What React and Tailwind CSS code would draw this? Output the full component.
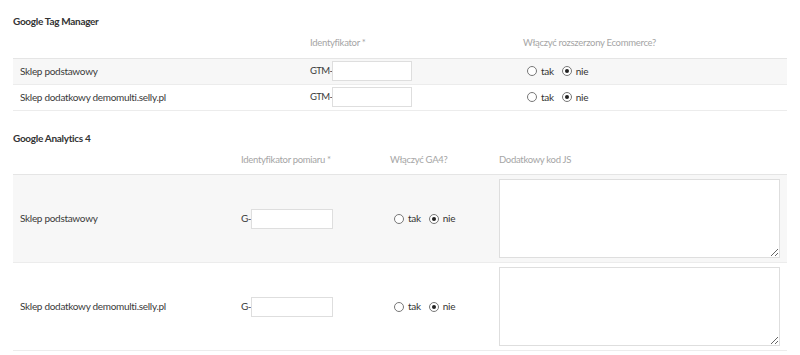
import React from 'react';

const Radio = ({ checked }) => (
  <span className="inline-flex h-[10px] w-[10px] items-center justify-center rounded-full border border-[#777] bg-white">
    {checked && <span className="h-[4px] w-[4px] rounded-full bg-[#222]" />}
  </span>
);

const YesNo = () => (
  <div className="ml-[4px] flex items-center text-[10px] text-[#333]">
    <Radio />
    <span className="ml-[4px] mr-[8px]">tak</span>
    <Radio checked />
    <span className="ml-[4px]">nie</span>
  </div>
);

const shops = ['Sklep podstawowy', 'Sklep dodatkowy demomulti.selly.pl'];

const App = () => {
  return (
    <div className="h-[355px] w-[800px] bg-white px-[13px] font-['Lato','Open_Sans',sans-serif] text-[10px] tracking-[-0.3px] text-[#3a3a3a]">
      <h3 className="pt-[15px] text-[10px] font-bold leading-[13px] text-[#333]">Google Tag Manager</h3>

      <table className="w-full table-fixed border-collapse">
        <colgroup>
          <col className="w-[290px]" />
          <col className="w-[213px]" />
          <col />
        </colgroup>
        <thead>
          <tr className="h-[30px] border-b border-[#e5e5e5] text-left text-[9.5px] text-[#a5a5a5]">
            <th className="px-[7px] font-normal"></th>
            <th className="px-[7px] pb-[7px] align-bottom font-normal">Identyfikator *</th>
            <th className="px-[7px] pb-[7px] align-bottom font-normal">Włączyć rozszerzony Ecommerce?</th>
          </tr>
        </thead>
        <tbody>
          {shops.map((shop, i) => (
            <tr key={shop} className={`h-[26px] border-b border-[#ececec] ${i === 0 ? 'bg-[#f7f7f7]' : 'bg-white'}`}>
              <td className="px-[7px]">{shop}</td>
              <td className="px-[7px]">
                <div className="flex items-center">
                  <span className="text-[9.5px] tracking-[-0.6px]">GTM-</span>
                  <input className="h-[20px] w-[80px] border border-[#dedede] bg-white outline-none" />
                </div>
              </td>
              <td className="px-[7px]">
                <YesNo />
              </td>
            </tr>
          ))}
        </tbody>
      </table>

      <h3 className="mt-[21px] text-[10px] font-bold leading-[13px] text-[#333]">Google Analytics 4</h3>

      <table className="w-full table-fixed border-collapse">
        <colgroup>
          <col className="w-[221px]" />
          <col className="w-[149px]" />
          <col className="w-[109px]" />
          <col />
        </colgroup>
        <thead>
          <tr className="h-[30px] border-b border-[#e5e5e5] text-left text-[9.5px] text-[#a5a5a5]">
            <th className="px-[7px] font-normal"></th>
            <th className="px-[7px] pb-[7px] align-bottom font-normal">Identyfikator pomiaru *</th>
            <th className="px-[7px] pb-[7px] align-bottom font-normal">Włączyć GA4?</th>
            <th className="px-[7px] pb-[7px] align-bottom font-normal">Dodatkowy kod JS</th>
          </tr>
        </thead>
        <tbody>
          {shops.map((shop, i) => (
            <tr key={shop} className={`h-[88px] border-b border-[#ececec] ${i === 0 ? 'bg-[#f7f7f7]' : 'bg-white'}`}>
              <td className="px-[7px]">{shop}</td>
              <td className="px-[7px]">
                <div className="flex items-center">
                  <span className="tracking-[-0.6px]">G-</span>
                  <input className="h-[20px] w-[82px] border border-[#dedede] bg-white outline-none" />
                </div>
              </td>
              <td className="px-[7px]">
                <YesNo />
              </td>
              <td className="py-[3px] pl-[7px] pr-[7px]">
                <textarea className="block h-[79px] w-full resize-y border border-[#dedede] bg-white outline-none" />
              </td>
            </tr>
          ))}
        </tbody>
      </table>
    </div>
  );
};

export default App;
